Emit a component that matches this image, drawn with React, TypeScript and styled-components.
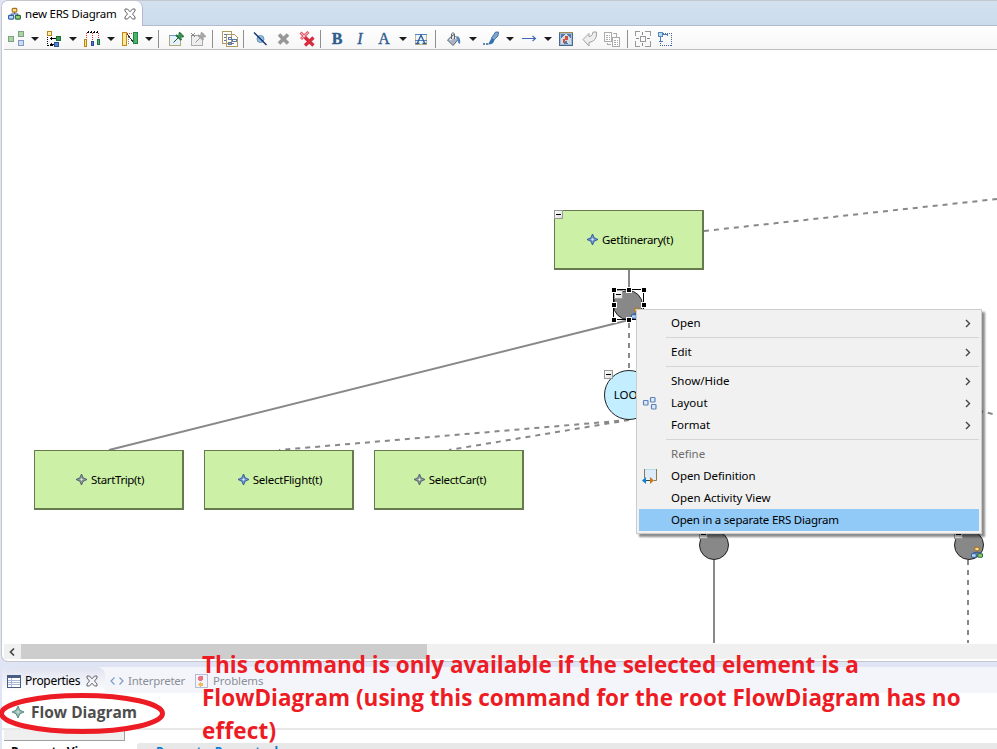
import React from "react";
import styled, { createGlobalStyle, css } from "styled-components";

const GlobalStyle = createGlobalStyle`
  * { box-sizing: border-box; }
  html, body { margin: 0; padding: 0; }
  body {
    width: 997px; height: 749px; overflow: hidden; background: #fff;
    font-family: "Noto Sans", "Open Sans", sans-serif; font-size: 12px; color: #000;
  }
`;

const Window = styled.div`
  position: relative;
  width: 997px;
  height: 749px;
  padding-left: 1px;
  display: flex;
  flex-direction: column;
  background: #e0e5f5;
  overflow: hidden;
`;

const EditorPanel = styled.section`
  height: 662px;
  flex: none;
  display: flex;
  flex-direction: column;
  background: #fff;
  border: 1px solid #c4c6cc;
  border-right: 0;
  border-radius: 7px 0 0 7px;
  overflow: hidden;
`;

const EditorTabs = styled.header`
  height: 25px;
  flex: none;
  display: flex;
  background: linear-gradient(#d3e0ef, #cbdcee);
  border-bottom: 1px solid #b3bad0;
`;

const EditorTab = styled.div`
  width: 141px;
  height: 25px;
  padding-left: 6px;
  display: flex;
  align-items: center;
  background: #fff;
  border-right: 1px solid #b3bad0;
  border-radius: 0 7px 0 0;
  svg { flex: none; }
`;

const Label = styled.span<{ $ls?: number; $size?: number; $color?: string }>`
  font-size: ${(p) => p.$size ?? 12}px;
  letter-spacing: ${(p) => p.$ls ?? 0}px;
  color: ${(p) => p.$color ?? "#000"};
  white-space: pre;
  line-height: 16px;
`;

const TabTitle = styled(Label)<{ $width: number }>`
  width: ${(p) => p.$width}px;
  margin-left: 4px;
  margin-right: 6px;
`;

const Toolbar = styled.div`
  height: 24px;
  flex: none;
  margin: 0 0 0 2px;
  padding-top: 2px;
  display: flex;
  align-items: center;
  background: linear-gradient(#fff, #f6f6f6);
  border-bottom: 1px solid #bdbdbd;
`;

const ToolButton = styled.span<{ $gap: number }>`
  width: 16px;
  height: 16px;
  flex: none;
  margin-left: ${(p) => p.$gap}px;
  display: flex;
`;

const Caret = styled.span`
  flex: none;
  margin: 0 0 0 7px;
  border: 4px solid transparent;
  border-top-color: #1c1c1c;
  border-bottom-width: 0;
`;

const Separator = styled.span<{ $gap: number }>`
  width: 1px;
  height: 18px;
  flex: none;
  margin-left: ${(p) => p.$gap}px;
  background: #8f8f8f;
`;

const LetterButton = styled(ToolButton)<{ $italic?: boolean; $bold?: boolean }>`
  justify-content: center;
  align-items: center;
  font-family: "Liberation Serif", serif;
  font-size: 16px;
  line-height: 16px;
  color: #2f5c8f;
  font-weight: ${(p) => (p.$bold ? 700 : 400)};
  font-style: ${(p) => (p.$italic ? "italic" : "normal")};
  -webkit-text-stroke: 0.35px #2f5c8f;
`;

const Canvas = styled.main`
  position: relative;
  flex: 1;
  background: #fff;
  overflow: hidden;
`;

const EdgeLayer = styled.svg`
  position: absolute;
  inset: 0;
`;

const Activity = styled.div<{ $x: number; $y: number }>`
  position: absolute;
  left: ${(p) => p.$x}px;
  top: ${(p) => p.$y}px;
  width: 150px;
  height: 60px;
  padding-left: 3px;
  display: flex;
  align-items: center;
  justify-content: center;
  gap: 4px;
  background: #ccf1a6;
  border: solid #66794f;
  border-width: 1px 2px 2px 1px;
`;

const CircleNode = styled.div<{ $x: number; $y: number; $d: number; $loop?: boolean }>`
  position: absolute;
  left: ${(p) => p.$x}px;
  top: ${(p) => p.$y}px;
  width: ${(p) => p.$d}px;
  height: ${(p) => p.$d}px;
  display: flex;
  align-items: center;
  justify-content: center;
  border-radius: 50%;
  border: 1px solid #222;
  background: ${(p) => (p.$loop ? "#c2eeff" : "#888")};
`;

const Collapse = styled.span<{ $x: number; $y: number }>`
  position: absolute;
  left: ${(p) => p.$x}px;
  top: ${(p) => p.$y}px;
  width: 9px;
  height: 9px;
  display: flex;
  align-items: center;
  justify-content: center;
  border: 1px solid #9a9a9a;
  background: linear-gradient(135deg, #fff, #ddd);
  &::after { content: ""; width: 5px; height: 1px; background: #000; }
`;

const FlowBadge = styled.span<{ $x: number; $y: number }>`
  position: absolute;
  left: ${(p) => p.$x}px;
  top: ${(p) => p.$y}px;
  display: flex;
`;

const Scrollbar = styled.div`
  height: 15px;
  flex: none;
  margin: 0 0 2px 2px;
  display: flex;
  align-items: center;
  background: #f0f0f0;
`;

const ScrollArrow = styled.span`
  width: 17px;
  padding-right: 2px;
  display: flex;
  justify-content: center;
`;

const ScrollThumb = styled.span`
  width: 406px;
  height: 15px;
  background: #cdcdcd;
`;

const Menu = styled.nav`
  position: absolute;
  left: 636px;
  top: 309px;
  width: 346px;
  height: 225px;
  padding: 2px;
  display: flex;
  flex-direction: column;
  background: #f1f1f1;
  border: 1px solid #ccc;
  box-shadow: 3px 3px 2px rgba(0, 0, 0, 0.45);
`;

const MenuRow = styled.div<{ $active?: boolean }>`
  height: 22px;
  flex: none;
  display: flex;
  align-items: center;
  padding-right: 8px;
  background: ${(p) => (p.$active ? "#91c9f7" : "transparent")};
`;

const MenuIcon = styled.span`
  width: 32px;
  padding-left: 3px;
  flex: none;
  display: flex;
`;

const MenuLabel = styled(Label)`
  flex: 1;
`;

const MenuRule = styled.hr`
  width: 313px;
  height: 1px;
  flex: none;
  border: 0;
  margin: 3px 0 3px 27px;
  background: #d5d5d5;
`;

const PropertiesPanel = styled.section`
  flex: 1;
  margin-top: 5px;
  margin-left: 1px;
  display: flex;
  flex-direction: column;
  background: #fff;
  border-radius: 7px 0 0 0;
  overflow: hidden;
`;

const ViewTabs = styled.div`
  height: 26px;
  flex: none;
  display: flex;
  background: #f4f5fb;
`;

const ViewTab = styled.div<{ $active?: boolean; $width: number }>`
  width: ${(p) => p.$width}px;
  height: 26px;
  display: flex;
  align-items: center;
  padding-left: 5px;
  padding-top: 2px;
  ${(p) =>
    p.$active &&
    css`
      border-radius: 0 8px 0 0;
      background: linear-gradient(#dfe3f1, #fff);
    `}
  svg { flex: none; }
`;

const TitleBar = styled.div`
  height: 37px;
  flex: none;
  display: flex;
  align-items: center;
  padding-left: 10px;
  padding-top: 2px;
  gap: 7px;
  border-bottom: 2px solid #e8e8e8;
`;

const Title = styled.h1`
  margin: 0;
  font-family: "Open Sans", sans-serif;
  font-size: 15.5px;
  line-height: 20px;
  font-weight: 700;
  color: #4d4d4d;
  white-space: pre;
`;

const PropertyBody = styled.div`
  flex: 1;
  display: flex;
  margin-left: 2px;
  overflow: hidden;
`;

const SideTabs = styled.div`
  width: 121px;
  margin-right: 12px;
`;

const SideTabTop = styled.div`
  height: 11px;
  background: #efefef;
  border-right: 1px solid #a0a0a0;
  border-bottom: 1px solid #a0a0a0;
`;

const SideTabName = styled.div`
  margin: 2px 0 0 7px;
  font: 700 12px/18px "Open Sans", sans-serif;
  white-space: pre;
`;

const PropertyHeader = styled.div`
  flex: 1;
  height: 14px;
  margin-top: 13px;
  padding-left: 19px;
  background: #e8e8e8;
  border-radius: 3px 0 0 0;
  color: #0078d7;
  font: 700 12px/18px "Open Sans", sans-serif;
  white-space: pre;
`;

const Callout = styled.p`
  position: absolute;
  left: 202px;
  top: 648px;
  width: 790px;
  margin: 0;
  font: 700 22.5px/33px "Open Sans", sans-serif;
  color: #ed1c24;
  white-space: pre;
`;

const CalloutLine = styled.span<{ $ls: number }>`
  display: block;
  letter-spacing: ${(p) => p.$ls}px;
`;

const CalloutRing = styled.svg`
  position: absolute;
  left: 0;
  top: 690px;
`;

const Ico = ({ children, s = 16 }: { children: React.ReactNode; s?: number }) => (
  <svg width={s} height={s} viewBox="0 0 16 16" fill="none" shapeRendering="crispEdges">
    {children}
  </svg>
);

const OrgIcon = ({ s = 16 }: { s?: number }) => (
  <svg width={s} height={s} viewBox="0 0 14 14" fill="none">
    <path d="M7 5v3M3.500 10V7.500h7V10" stroke="#3e5fa8" strokeWidth="1.200" />
    <rect x="4.500" y="1.500" width="5" height="4" rx="1" fill="#ffe08a" stroke="#a86f14" strokeWidth="1.200" />
    <rect x="0.600" y="9" width="5.500" height="4" rx="1" fill="#b9d8ff" stroke="#2f5fa5" strokeWidth="1.200" />
    <rect x="7.900" y="9" width="5.500" height="4" rx="1" fill="#8bcf75" stroke="#2c6b3c" strokeWidth="1.200" />
  </svg>
);

const CloseIcon = () => (
  <svg width="12" height="12" viewBox="0 0 12 12" fill="none" stroke="#666" strokeWidth="1">
    <path d="M1 1h2.500l2.500 2.800L8.500 1H11v2L8.500 6 11 9v2H8.500L6 8.200 3.500 11H1V9l2.500-3L1 3z" />
  </svg>
);

const Diamond = ({ color = "#44639d", fill = "#8fa9d4", s = 11 }: { color?: string; fill?: string; s?: number }) => (
  <svg width={s} height={s} viewBox="0 0 11 11">
    <path d="M5.500 0L7.200 3.800 11 5.500 7.200 7.200 5.500 11 3.800 7.200 0 5.500 3.800 3.800z" fill={fill} stroke={color} strokeWidth="0.900" />
    <path d="M5.500 4.200v2.600M4.200 5.500h2.600" stroke="#e6ecdf" strokeWidth="0.800" />
  </svg>
);

const Chevron = () => (
  <svg width="6" height="9" viewBox="0 0 6 9" fill="none">
    <path d="M1 1l3.500 3.500L1 8" stroke="#444" strokeWidth="1.400" />
  </svg>
);

const ArrangeIcon = () => (
  <Ico>
    <rect x="0.500" y="5.500" width="5" height="5" fill="#a9d6a0" stroke="#7f9f86" />
    <rect x="10.500" y="0.500" width="5" height="5" fill="#a9d6a0" stroke="#7f9f86" />
    <rect x="10.500" y="9.500" width="5" height="5" fill="#c7dcf8" stroke="#8199bf" />
  </Ico>
);
const TreeIcon = () => (
  <Ico>
    <rect x="1.500" y="0.500" width="4" height="4" fill="#fff1ad" stroke="#b88618" />
    <path d="M1.500 6v9M2 14.500h5" stroke="#000" strokeDasharray="1 1" />
    <path d="M4 7.500h6M5.500 6v3M4 13.500h4M5.500 12v3" stroke="#000" />
    <rect x="10.500" y="5.500" width="4" height="4" fill="#3c9c54" stroke="#1f6d37" />
    <rect x="8.500" y="11.500" width="4" height="4" fill="#5683cf" stroke="#294d91" />
  </Ico>
);
const DistributeIcon = () => (
  <Ico>
    <path d="M2.500 2v7M8.500 2v9M14.500 2v7" stroke="#ea2c2c" strokeDasharray="1 1" />
    <path d="M3 1.500h11M4.500 0v3M7.500 0v3M10.500 0v3M13.500 0v3" stroke="#000" strokeDasharray="2 1" />
    <rect x="0.500" y="8.500" width="2" height="7" fill="#ffe07b" stroke="#b88618" />
    <rect x="7.500" y="10.500" width="2" height="4" fill="#4d78c8" stroke="#294d91" />
    <rect x="13.500" y="8.500" width="2" height="5" fill="#55b469" stroke="#1f7540" />
  </Ico>
);
const MatchSizeIcon = () => (
  <Ico>
    <path d="M5 2.500h6" stroke="#ee3a3a" strokeDasharray="1 1" />
    <path d="M6.500 4v9" stroke="#888" strokeDasharray="1 1" />
    <path d="M5.500 3.500l6 8" stroke="#333" />
    <rect x="0.500" y="1.500" width="4" height="13" fill="#ffe896" stroke="#c08b17" />
    <rect x="11.500" y="1.500" width="4" height="11" fill="#48b568" stroke="#258345" />
  </Ico>
);
const PinIcon = ({ gray }: { gray?: boolean }) => (
  <svg width="16" height="16" viewBox="0 0 16 16" fill="none">
    <rect x="0.500" y="4.500" width="11" height="10" fill={gray ? "#eee" : "#e5f1fb"} stroke={gray ? "#aaa" : "#b3a775"} />
    <path d="M0 4.500h12" stroke={gray ? "#999" : "#6e9ac8"} />
    <path d="M10 1.500l4.500 4.500M7 4l5.500 5" stroke={gray ? "#a0a0a0" : "#1f6b35"} strokeWidth="2" />
    <path d="M9 3.500l3.500-1 1 3-2 3z" fill={gray ? "#a7a7a7" : "#3a9150"} />
    <path d="M9 7l-4.500 4.500" stroke={gray ? "#999" : "#234e37"} />
    {gray && <path d="M0 2l4 4M4 2L0 6" stroke="#888" />}
  </svg>
);
const CopyDiagramIcon = () => (
  <Ico>
    <path d="M0.500 0.500h9v12h-9zM4.500 3.500h8l3 3v9h-11z" fill="#fff" stroke="#b19a5e" />
    <path d="M2 3.500h3M2 6.500h2M2 9.500h2M6 6.500h3v2H6zM10 8.500h4v2h-4zM6 11.500h3v2H6zM9 12.500h3" stroke="#5a78aa" />
  </Ico>
);
const HideIcon = () => (
  <svg width="16" height="16" viewBox="0 0 16 16" fill="none">
    <circle cx="8.500" cy="8" r="3.500" fill="#8fc2dd" stroke="#6796b5" />
    <path d="M2 1.500l12.500 12.500" stroke="#1b2f6e" strokeWidth="1.400" />
  </svg>
);
const GrayX = () => (
  <svg width="16" height="16" viewBox="0 0 16 16" fill="none">
    <path d="M4 3.500l9 9M13 3.500l-9 9" stroke="#979797" strokeWidth="3.600" />
  </svg>
);
const RedX = () => (
  <svg width="16" height="16" viewBox="0 0 16 16" fill="none">
    <path d="M1.500 1.500l8 8M9.500 1L2 8" stroke="#e5596a" strokeWidth="3" />
    <path d="M2 2l6 6M9 1.500L2.500 7.500" stroke="#ffc5ca" />
    <path d="M6 6.500l8.500 8M14.500 6.500l-8.500 8" stroke="#d92b3e" strokeWidth="3.300" />
  </svg>
);
const TextBoxIcon = () => (
  <svg width="16" height="16" viewBox="0 0 16 16" fill="none">
    <rect x="2.500" y="3.500" width="11" height="10" fill="#eef5fd" stroke="#c8bb8b" />
    <path d="M2 3.500h12M2 9.500h12" stroke="#5085bf" />
    <path d="M4 13l4-9 4 9M2.500 12.500h4M9.500 12.500h4" stroke="#2f5c8f" strokeWidth="1.300" />
  </svg>
);
const BucketIcon = () => (
  <svg width="16" height="16" viewBox="0 0 16 16" fill="none">
    <path d="M1.500 9l6-5.500 4.500 5-5 6z" fill="#aab4c4" stroke="#59677d" />
    <path d="M4 9l4-3.500 2 2" stroke="#f4f6f9" strokeWidth="1.500" />
    <path d="M5.500 8V3q1.500-3 3 0v5" stroke="#666" />
    <path d="M10 5q5 0 4 8-3-1-2-5z" fill="#487fc0" />
  </svg>
);
const BrushIcon = () => (
  <svg width="16" height="16" viewBox="0 0 16 16" fill="none">
    <path d="M15.500 1h-3L8.500 7l2.500 2L15 5z" fill="#7da5d2" stroke="#365f96" strokeWidth="0.800" />
    <path d="M8.500 7l3 2q-1 4.500-6.500 4.500z" fill="#3571ae" />
    <path d="M0 13h6" stroke="#365f96" strokeWidth="1.500" strokeDasharray="2 1" />
  </svg>
);
const LineArrowIcon = () => (
  <svg width="16" height="16" viewBox="0 0 16 16" fill="none">
    <path d="M1 7.500h13M11.500 5l3 2.500-3 2.500" stroke="#3f66b4" strokeWidth="1.100" />
  </svg>
);
const PictureIcon = () => (
  <Ico>
    <rect x="1.500" y="1.500" width="13" height="13" fill="#9dbcdc" stroke="#a18a4d" />
    <path d="M3 3h10v10H3z" fill="#5679a8" />
    <path d="M4 6l4-3 5 4v6h-3l-2-4-2 4H3V9z" fill="#d4dce3" />
    <path d="M7 5h3v4H7zM5 8h2v4H5z" fill="#d05043" />
    <path d="M1.500 2v12.500h13V2" stroke="#46698f" />
  </Ico>
);
const BackIcon = () => (
  <svg width="16" height="16" viewBox="0 0 16 16" fill="none">
    <path d="M1 8.500l6-6v3q3.500 0 4-4.500h3.500q1 9-7.500 10.500v3.500z" fill="#eee" stroke="#a0a0a0" />
  </svg>
);
const CopiesIcon = () => (
  <Ico>
    <path d="M0.500 1.500h7v9h-7zM8.500 6.500h7v9h-7z" fill="#fff" stroke="#aaa" />
    <path d="M2 4.500h4M2 6.500h4M2 8.500h4M10 9.500h4M10 11.500h4M10 13.500h4" stroke="#aaa" strokeDasharray="2 1" />
    <path d="M9 2.500h3.500v3M6.500 13.500h-3v-2" stroke="#aaa" />
  </Ico>
);
const FitIcon = () => (
  <Ico>
    <path d="M0.500 5V0.500H5M10 0.500h5V5M15 10v5.500H10M5 15.500H0.500V10" stroke="#999" />
    <rect x="5.500" y="5.500" width="5" height="5" stroke="#999" />
    <path d="M7.500 1v3M7.500 12v3M1 7.500h3M12 7.500h3" stroke="#888" />
  </Ico>
);
const SnapIcon = () => (
  <Ico>
    <path d="M3.500 2.500h11v12h-11z" stroke="#3c66a3" strokeDasharray="1 1" />
    <path d="M3.500 5v6M5 3.500h6M1.500 10.500h4M10.500 2v3" stroke="#4a79b6" />
    <rect x="1.500" y="1.500" width="4" height="4" fill="#b6dcf4" stroke="#5889b7" />
  </Ico>
);
const LayoutIcon = () => (
  <svg width="16" height="16" viewBox="0 0 16 16" fill="#dceafb" stroke="#5e82b8" strokeWidth="1.200">
    <rect x="1.500" y="5.500" width="4.500" height="4.500" rx="0.800" />
    <rect x="8.500" y="2.500" width="4.500" height="4.500" rx="0.800" />
    <rect x="9.500" y="9.500" width="4.500" height="4.500" rx="0.800" />
  </svg>
);
const DefinitionIcon = () => (
  <svg width="16" height="16" viewBox="0 0 16 16" fill="none">
    <path d="M2 1h12v10H2z" fill="#dcecfa" />
    <path d="M2 1.500h12" stroke="#b9d8ee" />
    <path d="M2.500 1v9M14.500 1v11.500H12" stroke="#8b7a4c" />
    <path d="M3 12.500h8" stroke="#444" />
    <path d="M0 12.500l4-3.500v7z" fill="#0b83cf" />
    <path d="M12 12.500L8 9v7z" fill="#c37b21" />
  </svg>
);

type Tool = { x: number; icon?: React.ReactNode; letter?: string; caret?: boolean; sep?: boolean };
const tools: Tool[] = [
  { x: 8, icon: <ArrangeIcon />, caret: true },
  { x: 46, icon: <TreeIcon />, caret: true },
  { x: 84, icon: <DistributeIcon />, caret: true },
  { x: 122, icon: <MatchSizeIcon />, caret: true },
  { x: 158, sep: true },
  { x: 169, icon: <PinIcon /> },
  { x: 191, icon: <PinIcon gray /> },
  { x: 212, sep: true },
  { x: 222, icon: <CopyDiagramIcon /> },
  { x: 243, sep: true },
  { x: 252, icon: <HideIcon /> },
  { x: 275, icon: <GrayX /> },
  { x: 299, icon: <RedX /> },
  { x: 320, sep: true },
  { x: 329, letter: "B" },
  { x: 352, letter: "I" },
  { x: 376, letter: "A", caret: true },
  { x: 413, icon: <TextBoxIcon /> },
  { x: 435, sep: true },
  { x: 446, icon: <BucketIcon />, caret: true },
  { x: 483, icon: <BrushIcon />, caret: true },
  { x: 521, icon: <LineArrowIcon />, caret: true },
  { x: 558, icon: <PictureIcon /> },
  { x: 582, icon: <BackIcon /> },
  { x: 604, icon: <CopiesIcon /> },
  { x: 627, sep: true },
  { x: 635, icon: <FitIcon /> },
  { x: 657, icon: <SnapIcon /> },
];
const toolEnd = (t?: Tool) => (!t ? 4 : t.x + (t.sep ? 1 : t.caret ? 31 : 16));

const activities = [
  { x: 554, y: 210, name: "GetItinerary(t)", ls: -0.35, blue: true },
  { x: 34, y: 450, name: "StartTrip(t)", ls: -0.38, blue: false },
  { x: 204, y: 450, name: "SelectFlight(t)", ls: -0.25, blue: true },
  { x: 374, y: 450, name: "SelectCar(t)", ls: -0.33, blue: false },
];

type Entry = { name?: string; ls?: number; sub?: boolean; icon?: React.ReactNode; active?: boolean; disabled?: boolean };
const entries: Entry[] = [
  { name: "Open", sub: true },
  {},
  { name: "Edit", sub: true },
  {},
  { name: "Show/Hide", sub: true },
  { name: "Layout", sub: true, icon: <LayoutIcon /> },
  { name: "Format", sub: true },
  {},
  { name: "Refine", disabled: true },
  { name: "Open Definition", icon: <DefinitionIcon />, ls: -0.08 },
  { name: "Open Activity View" },
  { name: "Open in a separate ERS Diagram", active: true, ls: -0.23 },
];

export default function App() {
  return (
    <>
      <GlobalStyle />
      <Window>
        <EditorPanel>
          <EditorTabs>
            <EditorTab>
              <OrgIcon s={13} />
              <TabTitle $width={93} $size={11.5} $ls={-0.22}>new ERS Diagram</TabTitle>
              <CloseIcon />
            </EditorTab>
          </EditorTabs>
          <Toolbar>
            {tools.map((t, i) => {
              const gap = t.x - toolEnd(tools[i - 1]);
              if (t.sep) return <Separator key={i} $gap={gap} />;
              return (
                <React.Fragment key={i}>
                  {t.letter ? (
                    <LetterButton $gap={gap} $bold={t.letter === "B"} $italic={t.letter === "I"}>
                      {t.letter}
                    </LetterButton>
                  ) : (
                    <ToolButton $gap={gap}>{t.icon}</ToolButton>
                  )}
                  {t.caret && <Caret />}
                </React.Fragment>
              );
            })}
          </Toolbar>
          <Canvas>
            <EdgeLayer width="995" height="594" viewBox="2 50 995 594" fill="none" stroke="#888" strokeWidth="2">
              <path d="M629 270V290M629 320L109 450M714 560V643" />
              <path
                d="M629 323V370M629 420L279 450M629 420L449 450M704 231L997 199M968 560V643M978 410.500L997 415"
                strokeDasharray="5 5"
              />
            </EdgeLayer>
            {activities.map((a) => (
              <Activity key={a.name} $x={a.x - 2} $y={a.y - 50}>
                <Diamond
                  color={a.blue ? "#2f5592" : "#4a5a6a"}
                  fill={a.blue ? "#6c96d8" : "#8b9996"}
                />
                <Label $ls={a.ls} $size={11.5}>{a.name}</Label>
              </Activity>
            ))}
            <Collapse $x={552} $y={160} />
            <CircleNode $x={602} $y={320} $d={50} $loop>
              <Label $ls={-0.1} $size={11.5}>LOOP</Label>
            </CircleNode>
            <Collapse $x={602} $y={320} />
            <CircleNode $x={611} $y={240} $d={30} />
            <Collapse $x={612} $y={240} />
            <FlowBadge $x={629} $y={257}><OrgIcon s={12} /></FlowBadge>
            <EdgeLayer width="995" height="594" viewBox="2 50 995 594" fill="none" shapeRendering="crispEdges">
              <rect x="613.500" y="289.500" width="30" height="30" stroke="#000" />
              {[612, 627, 642].map((x) =>
                [288, 303, 318].map((y) =>
                  x === 627 && y === 303 ? null : (
                    <rect key={`${x}-${y}`} x={x - 0.5} y={y - 0.5} width="5" height="5" fill="#000" stroke="#fff" />
                  ),
                ),
              )}
            </EdgeLayer>
            <CircleNode $x={697} $y={480} $d={30} />
            <Collapse $x={697} $y={480} />
            <CircleNode $x={952} $y={480} $d={30} />
            <Collapse $x={952} $y={480} />
            <FlowBadge $x={969} $y={496}><OrgIcon s={12} /></FlowBadge>
          </Canvas>
          <Scrollbar>
            <ScrollArrow>
              <svg width="8" height="10" viewBox="0 0 8 10" fill="none">
                <path d="M6 1.500L2.500 5 6 8.500" stroke="#444" strokeWidth="1.700" />
              </svg>
            </ScrollArrow>
            <ScrollThumb />
          </Scrollbar>
        </EditorPanel>

        <PropertiesPanel>
          <ViewTabs>
            <ViewTab $active $width={103}>
              <svg width="14" height="13" viewBox="0 0 14 13" fill="none" shapeRendering="crispEdges">
                <rect x="0.500" y="0.500" width="13" height="12" fill="#fff" stroke="#4a5d85" />
                <path d="M1 2h13" stroke="#4a5d85" strokeWidth="2" />
                <path d="M4.500 3v9M1 5.500h12M1 7.500h12M1 9.500h12" stroke="#a9b8d8" />
              </svg>
              <TabTitle $width={55} $ls={-0.3}>Properties</TabTitle>
              <CloseIcon />
            </ViewTab>
            <ViewTab $width={85}>
              <svg width="14" height="8" viewBox="0 0 14 8" fill="none" stroke="#7d9cc4" strokeWidth="1.200">
                <path d="M4.500 0.500L1 4l3.500 3.500M9.500 0.500L13 4 9.500 7.500" />
              </svg>
              <TabTitle $width={60} $ls={-0.25} $size={11.5} $color="#8a8f98">Interpreter</TabTitle>
            </ViewTab>
            <ViewTab $width={90}>
              <Ico s={14}>
                <rect x="0.500" y="0.500" width="14" height="15" fill="#f3f3fa" stroke="#a9b5cf" />
                <circle cx="6.500" cy="5" r="3" fill="#ea7180" />
                <circle cx="6.500" cy="12" r="2.500" fill="#eebc5c" />
              </Ico>
              <TabTitle $width={55} $ls={-0.1} $size={11.5} $color="#8a8f98">Problems</TabTitle>
            </ViewTab>
          </ViewTabs>
          <TitleBar>
            <Diamond color="#5d8a83" fill="#8fbab3" s={12} />
            <Title>Flow Diagram</Title>
          </TitleBar>
          <PropertyBody>
            <SideTabs>
              <SideTabTop />
              <SideTabName>Property View</SideTabName>
            </SideTabs>
            <PropertyHeader>Property  Property d</PropertyHeader>
          </PropertyBody>
        </PropertiesPanel>

        <Menu>
          {entries.map((e, i) =>
            e.name ? (
              <MenuRow key={i} $active={e.active}>
                <MenuIcon>{e.icon}</MenuIcon>
                <MenuLabel $size={11.5} $ls={e.ls ?? 0} $color={e.disabled ? "#6d6d6d" : "#000"}>{e.name}</MenuLabel>
                {e.sub && <Chevron />}
              </MenuRow>
            ) : (
              <MenuRule key={i} />
            ),
          )}
        </Menu>
        <CalloutRing width="166" height="46" viewBox="0 690 166 46" fill="none">
          <ellipse cx="82" cy="713.500" rx="80.500" ry="18" stroke="#ed1c24" strokeWidth="5" />
        </CalloutRing>
        <Callout>
          <CalloutLine $ls={0}>This command is only available if the selected element is a</CalloutLine>
          <CalloutLine $ls={0}>FlowDiagram (using this command for the root FlowDiagram has no</CalloutLine>
          <CalloutLine $ls={0.2}>effect)</CalloutLine>
        </Callout>
      </Window>
    </>
  );
}
